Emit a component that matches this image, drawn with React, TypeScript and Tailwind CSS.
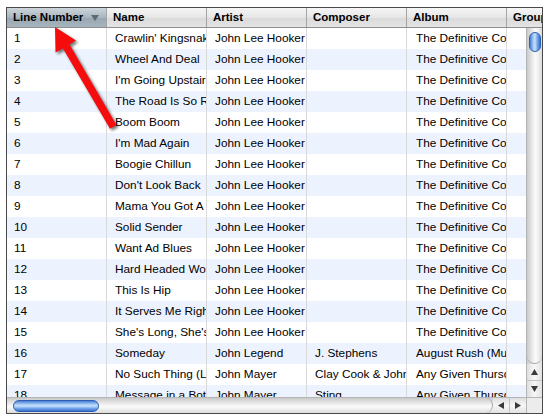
import React from 'react';

type Track = {
  name: string;
  artist: string;
  composer: string;
  album: string;
};

const tracks: Track[] = [
  { name: "Crawlin' Kingsnake", artist: 'John Lee Hooker', composer: '', album: 'The Definitive Collection' },
  { name: 'Wheel And Deal', artist: 'John Lee Hooker', composer: '', album: 'The Definitive Collection' },
  { name: "I'm Going Upstairs", artist: 'John Lee Hooker', composer: '', album: 'The Definitive Collection' },
  { name: 'The Road Is So Rough', artist: 'John Lee Hooker', composer: '', album: 'The Definitive Collection' },
  { name: 'Boom Boom', artist: 'John Lee Hooker', composer: '', album: 'The Definitive Collection' },
  { name: "I'm Mad Again", artist: 'John Lee Hooker', composer: '', album: 'The Definitive Collection' },
  { name: 'Boogie Chillun', artist: 'John Lee Hooker', composer: '', album: 'The Definitive Collection' },
  { name: "Don't Look Back", artist: 'John Lee Hooker', composer: '', album: 'The Definitive Collection' },
  { name: 'Mama You Got A Daughter', artist: 'John Lee Hooker', composer: '', album: 'The Definitive Collection' },
  { name: 'Solid Sender', artist: 'John Lee Hooker', composer: '', album: 'The Definitive Collection' },
  { name: 'Want Ad Blues', artist: 'John Lee Hooker', composer: '', album: 'The Definitive Collection' },
  { name: 'Hard Headed Woman', artist: 'John Lee Hooker', composer: '', album: 'The Definitive Collection' },
  { name: 'This Is Hip', artist: 'John Lee Hooker', composer: '', album: 'The Definitive Collection' },
  { name: 'It Serves Me Right', artist: 'John Lee Hooker', composer: '', album: 'The Definitive Collection' },
  { name: "She's Long, She's Tall", artist: 'John Lee Hooker', composer: '', album: 'The Definitive Collection' },
  { name: 'Someday', artist: 'John Legend', composer: 'J. Stephens', album: 'August Rush (Music From the Motion Picture)' },
  { name: 'No Such Thing (Live)', artist: 'John Mayer', composer: 'Clay Cook & John Mayer', album: 'Any Given Thursday' },
  { name: 'Message in a Bottle', artist: 'John Mayer', composer: 'Sting', album: 'Any Given Thursday' },
];

const cell = 'w-[100px] shrink-0 overflow-hidden whitespace-nowrap border-r border-[#d9d9d9]';

function HeaderCell({ label, sorted }: { label: string; sorted?: boolean }) {
  return (
    <div
      className={`relative w-[100px] shrink-0 overflow-hidden whitespace-nowrap border-r border-[#a4a4a4] pl-[6px] ${
        sorted
          ? 'bg-[linear-gradient(to_bottom,#cdd5db,#a9b6bf_50%,#97a6b0_51%,#a7b4bd)]'
          : 'bg-[linear-gradient(to_bottom,#f6f6f6,#e6e6e6_50%,#dadada_51%,#e4e4e4)]'
      }`}
    >
      {label}
      {sorted && (
        <svg className="absolute right-[7px] top-[7px]" width="8" height="6" viewBox="0 0 8 6">
          <path d="M0 0 H8 L4 6 Z" fill="#5d6a73" />
        </svg>
      )}
    </div>
  );
}

function Arrow() {
  return (
    <svg className="pointer-events-none absolute left-0 top-0" width="551" height="419" viewBox="0 0 551 419">
      <defs>
        <filter id="sh" x="-20%" y="-20%" width="140%" height="140%">
          <feGaussianBlur stdDeviation="1.5" />
        </filter>
      </defs>
      <polygon
        points="55,27 76,40.5 69.5,44.5 116.5,125 110,128.8 63,48.5 55.5,52.5"
        fill="#000"
        opacity="0.55"
        transform="translate(2,2)"
        filter="url(#sh)"
      />
      <polygon points="55,27 76,40.5 69.5,44.5 116.5,125 110,128.8 63,48.5 55.5,52.5" fill="#f50d0d" />
    </svg>
  );
}

export default function App() {
  return (
    <div className="relative h-[419px] w-[551px] bg-white pl-[6px] pt-[7px] font-['Liberation_Sans',Arial,sans-serif] text-[11.8px] text-black">
      <div className="flex h-[407px] w-[537px] flex-col border border-[#4a4a4a]">
        {/* header */}
        <div className="flex h-[20px] shrink-0 border-b border-[#8e8e8e] text-[11.5px] font-bold leading-[19px]">
          <HeaderCell label="Line Number" sorted />
          <HeaderCell label="Name" />
          <HeaderCell label="Artist" />
          <HeaderCell label="Composer" />
          <HeaderCell label="Album" />
          <div className="flex-1 overflow-hidden whitespace-nowrap bg-[linear-gradient(to_bottom,#f6f6f6,#e6e6e6_50%,#dadada_51%,#e4e4e4)] pl-[6px]">
            Grouping
          </div>
        </div>

        {/* body */}
        <div className="flex h-[369px] shrink-0">
          <div className="flex-1 overflow-hidden">
            {tracks.map((t, i) => (
              <div
                key={i}
                className={`flex h-[21px] shrink-0 leading-[21px] ${i % 2 === 1 ? 'bg-[#edf3fe]' : 'bg-white'}`}
              >
                <div className={`${cell} pl-[7px]`}>{i + 1}</div>
                <div className={`${cell} pl-[8px]`}>{t.name}</div>
                <div className={`${cell} pl-[8px]`}>{t.artist}</div>
                <div className={`${cell} pl-[8px]`}>{t.composer}</div>
                <div className={`${cell} pl-[9px]`}>{t.album}</div>
                <div className="flex-1" />
              </div>
            ))}
          </div>

          {/* vertical scrollbar */}
          <div className="flex w-[16px] shrink-0 flex-col border-l border-[#b4b4b4] bg-[linear-gradient(to_right,#c9c9c9,#f2f2f2_45%,#fafafa_60%,#dcdcdc)]">
            <div className="relative flex-1 overflow-hidden rounded-b-[8px] border-b border-[#a9a9a9]">
              <div className="mx-auto mt-[4px] h-[20px] w-[12px] rounded-[6px] border border-[#2c5fb3] bg-[linear-gradient(to_right,#4b7fd6,#a9cdf6_35%,#c6e0fb_50%,#6fa3ea_75%,#3b6fcf)]" />
            </div>
            <div className="flex h-[17px] items-center justify-center border-b border-[#c4c4c4] bg-[linear-gradient(to_right,#dedede,#f7f7f7,#e2e2e2)]">
              <svg width="7" height="6" viewBox="0 0 7 6">
                <path d="M3.5 0 L7 6 H0 Z" fill="#3a3a3a" />
              </svg>
            </div>
            <div className="flex h-[16px] items-center justify-center bg-[linear-gradient(to_right,#dedede,#f7f7f7,#e2e2e2)]">
              <svg width="7" height="6" viewBox="0 0 7 6">
                <path d="M0 0 H7 L3.5 6 Z" fill="#3a3a3a" />
              </svg>
            </div>
          </div>
        </div>

        {/* horizontal scrollbar */}
        <div className="flex h-[16px] shrink-0 border-t border-[#b4b4b4]">
          <div className="flex flex-1 bg-[linear-gradient(to_bottom,#c9c9c9,#f2f2f2_45%,#fafafa_60%,#dcdcdc)]">
            <div className="flex flex-1 items-center overflow-hidden rounded-r-[8px] border-r border-[#a9a9a9] pl-[6px]">
              <div className="h-[12px] w-[86px] rounded-[6px] border border-[#2c5fb3] bg-[linear-gradient(to_bottom,#4b7fd6,#a9cdf6_35%,#c6e0fb_50%,#6fa3ea_75%,#3b6fcf)]" />
            </div>
            <div className="flex w-[17px] items-center justify-center border-r border-[#c4c4c4] bg-[linear-gradient(to_bottom,#dedede,#f7f7f7,#e2e2e2)]">
              <svg width="6" height="7" viewBox="0 0 6 7">
                <path d="M0 3.5 L6 0 V7 Z" fill="#3a3a3a" />
              </svg>
            </div>
            <div className="flex w-[16px] items-center justify-center bg-[linear-gradient(to_bottom,#dedede,#f7f7f7,#e2e2e2)]">
              <svg width="6" height="7" viewBox="0 0 6 7">
                <path d="M0 0 L6 3.5 L0 7 Z" fill="#3a3a3a" />
              </svg>
            </div>
          </div>
          <div className="w-[16px] shrink-0 border-l border-[#b4b4b4] bg-[#ececec]" />
        </div>
      </div>
      <Arrow />
    </div>
  );
}
